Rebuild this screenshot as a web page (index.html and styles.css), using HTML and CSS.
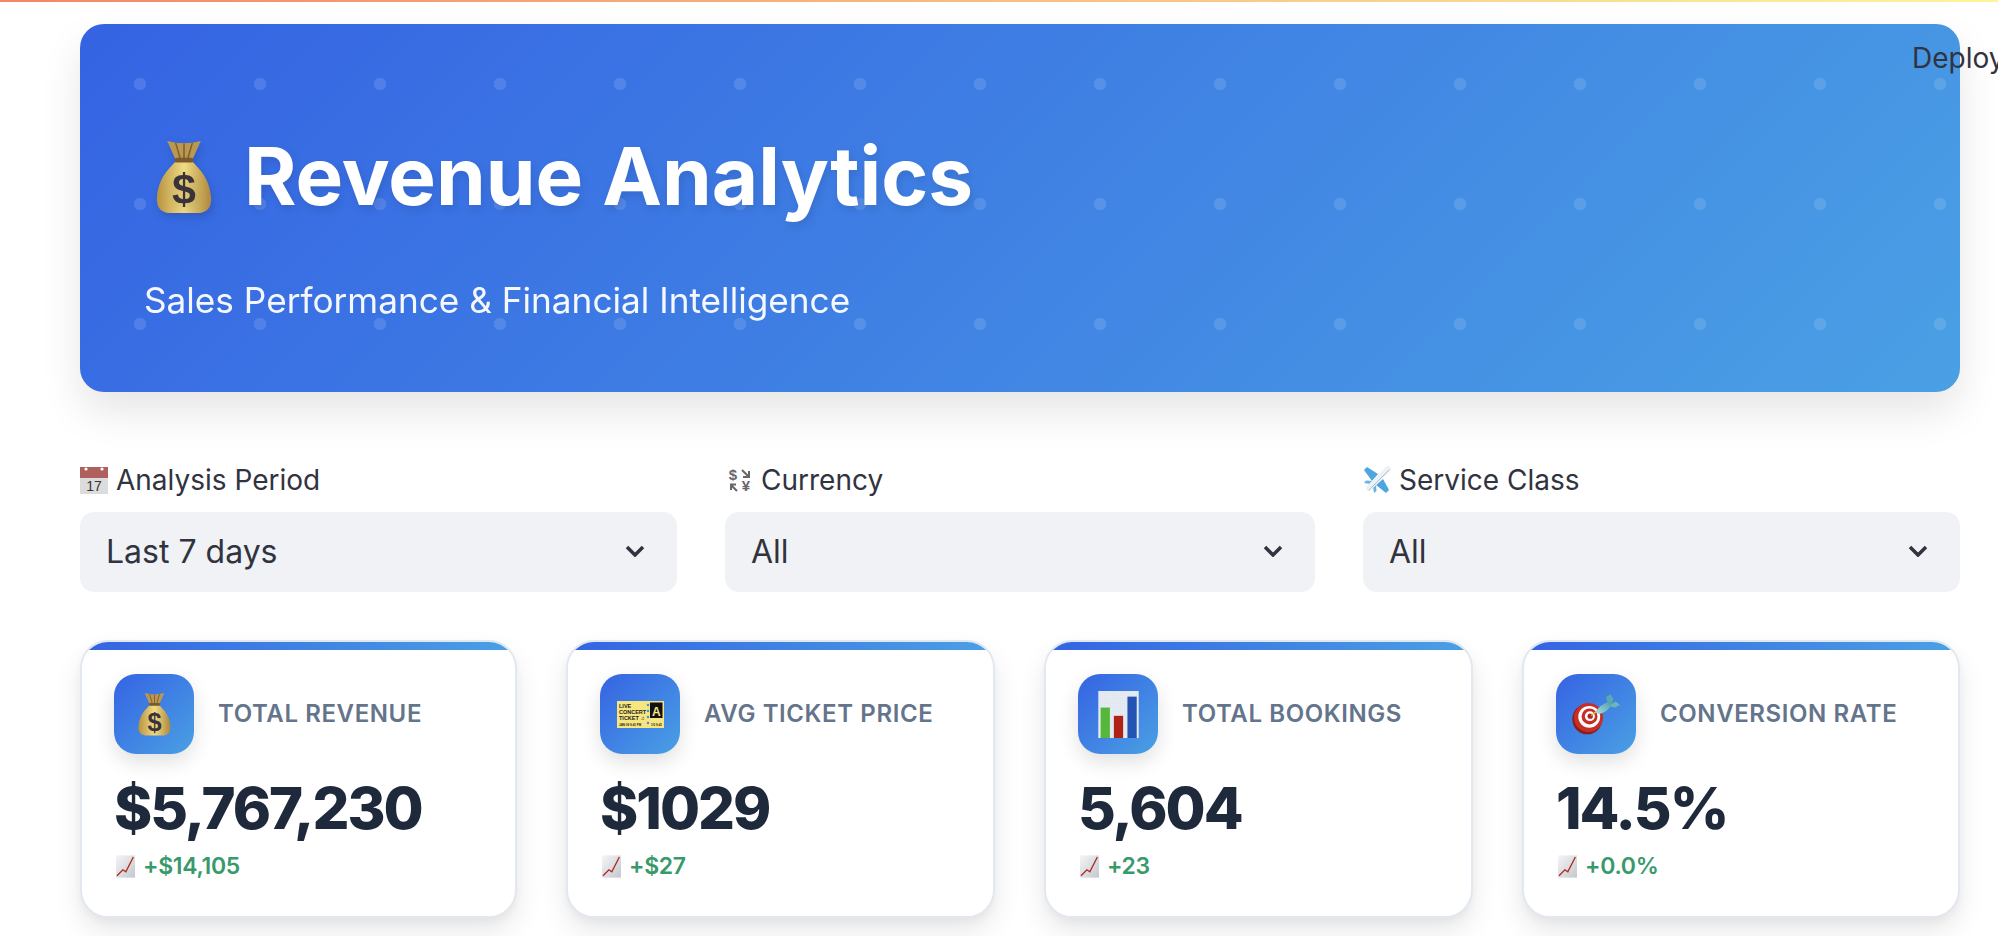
FILE: index.html
```html
<!DOCTYPE html>
<html lang="en">
<head>
  <meta charset="UTF-8" />
  <meta name="viewport" content="width=device-width, initial-scale=1.0" />
  <title>Revenue Analytics</title>
  <link rel="stylesheet" href="styles.css">
</head>
<body>
  <!-- Shared drawings -->
  <svg class="defs" aria-hidden="true">
    <defs>
      <linearGradient id="bagFill" x1="0" y1="0" x2="1" y2="0">
        <stop offset="0" stop-color="#b8923f"/>
        <stop offset="0.5" stop-color="#f0dc86"/>
        <stop offset="1" stop-color="#ad873c"/>
      </linearGradient>
      <linearGradient id="chartFill" x1="0" y1="0" x2="1" y2="1">
        <stop offset="0" stop-color="#f4f5f7"/>
        <stop offset="1" stop-color="#c4c9cf"/>
      </linearGradient>
      <linearGradient id="dartFill" x1="0" y1="1" x2="1" y2="0">
        <stop offset="0" stop-color="#a8e0e6"/>
        <stop offset="1" stop-color="#4f9aa6"/>
      </linearGradient>
      <pattern id="gridFill" width="6" height="6" patternUnits="userSpaceOnUse">
        <rect width="6" height="6" fill="#e9eef4"/>
        <path d="M0 0H6M0 0V6" stroke="#cfd8e2" stroke-width="1.2"/>
      </pattern>
    </defs>
    <symbol id="bag" viewBox="0 0 60 80">
      <path d="M12 2 Q30 7 48 2 L39 22 L21 22 Z" fill="#bb9750"/>
      <path d="M21 4 L26 21M30 5 V21M39 4 L34 21" stroke="#7d5f2c" stroke-width="1.6" fill="none"/>
      <path d="M21 24 C15 31 3 40 1 62 C0 74 6 78 13 79 L47 79 C54 78 60 74 59 62 C57 40 45 31 39 24 Z" fill="url(#bagFill)"/>
      <rect x="20" y="20" width="20" height="5" rx="2" fill="#7a5a2a"/>
    </symbol>
    <symbol id="chart-up" viewBox="0 0 58 68">
      <rect width="58" height="68" fill="url(#chartFill)"/>
      <path d="M3 62 L21 44 L30 50 L53 5" fill="none" stroke="#b3261c" stroke-width="4"/>
    </symbol>
  </svg>

  <div class="top-bar"></div>
  <a class="deploy">Deploy</a>

  <main class="page">
    <!-- Hero -->
    <header class="hero">
      <h1 class="hero-title">
        <svg class="hero-bag" viewBox="0 0 60 80"><use href="#bag"/><text x="30" y="70" class="bag-sign">$</text></svg>
        <span>Revenue Analytics</span>
      </h1>
      <p class="hero-sub">Sales Performance &amp; Financial Intelligence</p>
    </header>

    <!-- Filtres -->
    <section class="filters">
      <div class="filter">
        <div class="filter-label">
          <svg class="label-icon" viewBox="0 0 28 28">
            <rect y="1" width="28" height="27" fill="#dcdcdc"/>
            <path d="M0 1H28V12H0Z" fill="#b0605c"/>
            <circle cx="6" cy="3" r="1.6" fill="#fff"/>
            <circle cx="22" cy="3" r="1.6" fill="#fff"/>
            <text x="14" y="25" class="cal-day">17</text>
          </svg>
          Analysis Period
        </div>
        <div class="select">
          <span>Last 7 days</span>
          <svg class="chevron" viewBox="0 0 20 12"><path d="M2 2 L10 10 L18 2"/></svg>
        </div>
      </div>
      <div class="filter">
        <div class="filter-label">
          <svg class="label-icon" viewBox="0 0 28 28">
            <text x="8" y="14" class="fx-sign">$</text>
            <text x="21" y="25" class="fx-sign">¥</text>
            <path d="M17 4 L24 11M24 5 V11 H18" class="fx-arrow"/>
            <path d="M12 25 L6 19M6 24 V18.500 H11" class="fx-arrow"/>
          </svg>
          Currency
        </div>
        <div class="select">
          <span>All</span>
          <svg class="chevron" viewBox="0 0 20 12"><path d="M2 2 L10 10 L18 2"/></svg>
        </div>
      </div>
      <div class="filter">
        <div class="filter-label">
          <svg class="label-icon" viewBox="0 0 28 28">
            <path d="M15 8 L4 1 L1 4 L9 15 Z" fill="#4fa5e0"/>
            <path d="M20 13 L26 24 L23 27 L13 19 Z" fill="#4fa5e0"/>
            <path d="M7 18 L1 17 L3 14.500 L10 15 Z M10 21 L11 27 L13.500 25 L13 18 Z" fill="#6ab3e6"/>
            <path d="M6 22 L25 3" stroke="#eef1f4" stroke-width="6" stroke-linecap="round"/>
            <path d="M6 24 L26 4" stroke="#b4bcc5" stroke-width="1" stroke-linecap="round"/>
          </svg>
          Service Class
        </div>
        <div class="select">
          <span>All</span>
          <svg class="chevron" viewBox="0 0 20 12"><path d="M2 2 L10 10 L18 2"/></svg>
        </div>
      </div>
    </section>

    <!-- KPI -->
    <section class="kpis">
      <article class="card">
        <div class="card-bar"></div>
        <div class="card-body">
          <div class="card-head">
            <div class="card-icon"><svg class="icon-bag" viewBox="0 0 60 80"><use href="#bag"/><text x="30" y="70" class="bag-sign">$</text></svg></div>
            <div class="card-label">Total Revenue</div>
          </div>
          <div class="card-value">$5,767,230</div>
          <div class="card-delta"><svg class="delta-icon"><use href="#chart-up"/></svg>+$14,105</div>
        </div>
      </article>

      <article class="card">
        <div class="card-bar"></div>
        <div class="card-body">
          <div class="card-head">
            <div class="card-icon">
              <svg class="icon-ticket" viewBox="0 0 94 54">
                <rect width="94" height="54" fill="#f7e57f"/>
                <rect x="66" y="3" width="25" height="31" fill="#111"/>
                <text x="4" y="13" class="tk-line">LIVE</text>
                <text x="4" y="25" class="tk-line">CONCERT</text>
                <text x="4" y="37" class="tk-line">TICKET ♫</text>
                <text x="4" y="50" class="tk-small">JAN 09 9:41 PM</text>
                <text x="68" y="50" class="tk-small">1/0 9:41</text>
                <text x="78.500" y="30" class="tk-seat">A</text>
                <g fill="#4a8fe0">
                  <circle cx="62" cy="8" r="2.500"/>
                  <circle cx="62" cy="20" r="2.500"/>
                  <circle cx="62" cy="32" r="2.500"/>
                  <circle cx="62" cy="44" r="2.500"/>
                </g>
              </svg>
            </div>
            <div class="card-label">Avg Ticket Price</div>
          </div>
          <div class="card-value">$1029</div>
          <div class="card-delta"><svg class="delta-icon"><use href="#chart-up"/></svg>+$27</div>
        </div>
      </article>

      <article class="card">
        <div class="card-bar"></div>
        <div class="card-body">
          <div class="card-head">
            <div class="card-icon">
              <svg class="icon-chart" viewBox="0 0 122 142">
                <rect width="122" height="142" fill="url(#gridFill)"/>
                <rect x="7" y="50" width="28" height="92" fill="#55b83a"/>
                <rect x="47" y="75" width="28" height="67" fill="#ae2315"/>
                <rect x="88" y="17" width="28" height="125" fill="#2354b3"/>
              </svg>
            </div>
            <div class="card-label">Total Bookings</div>
          </div>
          <div class="card-value">5,604</div>
          <div class="card-delta"><svg class="delta-icon"><use href="#chart-up"/></svg>+23</div>
        </div>
      </article>

      <article class="card">
        <div class="card-bar"></div>
        <div class="card-body">
          <div class="card-head">
            <div class="card-icon">
              <svg class="icon-dart" viewBox="0 0 145 122">
                <ellipse cx="46" cy="75" rx="45" ry="46" fill="#8f1d17"/>
                <circle cx="50" cy="70" r="44" fill="#c62f28"/>
                <circle cx="52" cy="68" r="33" fill="#fff"/>
                <circle cx="53" cy="67" r="24" fill="#c62f28"/>
                <circle cx="54" cy="66" r="15" fill="#fff"/>
                <circle cx="55" cy="66" r="8" fill="#b5241e"/>
                <path d="M58 64 L76 50" stroke="#e9c24a" stroke-width="4"/>
                <path d="M108 26 L103 8 L116 0 L125 14 L120 28 Z" fill="#5da8b0"/>
                <path d="M116 30 L132 22 L145 32 L130 40 L112 36 Z" fill="#6cb4ba"/>
                <path d="M72 52 Q84 32 114 22 L120 30 Q108 54 80 60 Z" fill="url(#dartFill)"/>
              </svg>
            </div>
            <div class="card-label">Conversion Rate</div>
          </div>
          <div class="card-value">14.5%</div>
          <div class="card-delta"><svg class="delta-icon"><use href="#chart-up"/></svg>+0.0%</div>
        </div>
      </article>
    </section>
  </main>
</body>
</html>
```

FILE: styles.css
```css
/* ===============================
   BASE
   =============================== */
* {
  margin: 0;
  padding: 0;
  box-sizing: border-box;
}
html,
body {
  height: 100%;
  overflow: hidden;
}
body {
  font-family: Inter, "Liberation Sans", sans-serif;
  background: #fff;
  color: #31333f;
}
.defs {
  position: absolute;
  width: 0;
  height: 0;
}
.top-bar {
  height: 2px;
  background: linear-gradient(90deg, #f2866a, #fdf59a);
}
.deploy {
  position: absolute;
  top: 41px;
  left: 1912px;
  font-size: 28px;
  line-height: 34px;
  white-space: nowrap;
  z-index: 5;
}
.page {
  padding: 22px 38px 0 80px;
}

/* ===============================
   HERO
   =============================== */
.hero {
  height: 368px;
  padding: 90px 64px 0;
  border-radius: 24px;
  color: #fff;
  background-color: #3563e3;
  background-image:
    radial-gradient(circle at center, rgba(255, 255, 255, 0.12) 0 6px, transparent 6.5px),
    linear-gradient(135deg, #3563e3 0%, #4aa0e4 100%);
  background-size: 120px 120px, 100% 100%;
  box-shadow: 0 20px 40px rgba(0, 0, 0, 0.1);
}
.hero-title {
  display: flex;
  align-items: center;
  font-size: 80px;
  line-height: 124px;
  font-weight: 700;
  text-shadow: 2px 4px 8px rgba(0, 0, 0, 0.1);
}
.hero-bag {
  width: 56px;
  height: 75px;
  margin: 0 32px 0 12px;
  filter: drop-shadow(2px 4px 4px rgba(0, 0, 0, 0.15));
}
.hero-sub {
  margin-top: 40px;
  font-size: 35.200px;
  line-height: 44px;
  opacity: 0.95;
}

/* ===============================
   FILTERS
   =============================== */
.filters {
  display: grid;
  grid-template-columns: 597fr 590fr 597fr;
  gap: 48px;
  margin-top: 68px;
}
.filter-label {
  display: flex;
  align-items: center;
  gap: 8px;
  height: 40px;
  margin-bottom: 12px;
  font-size: 28px;
}
.label-icon {
  width: 28px;
  height: 28px;
  flex: none;
}
.cal-day {
  font: 14px "Liberation Sans", sans-serif;
  fill: #333;
  text-anchor: middle;
}
.fx-sign {
  font: 700 15px "Liberation Sans", sans-serif;
  fill: #66666c;
  text-anchor: middle;
}
.fx-arrow {
  fill: none;
  stroke: #66666c;
  stroke-width: 2;
}
.select {
  display: flex;
  align-items: center;
  justify-content: space-between;
  height: 80px;
  padding: 0 32px 2px 26px;
  border-radius: 14px;
  background: #f0f2f6;
  font-size: 32px;
}
.chevron {
  width: 20px;
  height: 12px;
}
.chevron path {
  fill: none;
  stroke: #31333f;
  stroke-width: 3.500;
}

/* ===============================
   KPI CARDS
   =============================== */
.kpis {
  display: grid;
  grid-template-columns: 437fr 429fr 429fr 438fr;
  gap: 49px;
  margin-top: 48px;
}
.card {
  height: 278px;
  border: 2px solid #e2e8f0;
  border-radius: 28px;
  overflow: hidden;
  background: #fff;
  box-shadow: 0 14px 28px rgba(0, 0, 0, 0.09), 0 4px 8px rgba(0, 0, 0, 0.04);
}
.card-bar {
  height: 8px;
  background: linear-gradient(90deg, #3563e3, #4aa0e4);
}
.card-body {
  padding: 24px 32px 0;
}
.card-head {
  display: flex;
  align-items: center;
  gap: 24px;
}
.card-icon {
  display: flex;
  align-items: center;
  justify-content: center;
  width: 80px;
  height: 80px;
  border-radius: 22px;
  background: linear-gradient(135deg, #3563e3, #4aa0e4);
  box-shadow: 0 8px 20px rgba(0, 0, 0, 0.12);
}
.icon-bag {
  width: 33px;
  height: 44px;
}
.bag-sign {
  font: 700 46px "Liberation Sans", sans-serif;
  fill: #3a3338;
  text-anchor: middle;
}
.icon-ticket {
  width: 47px;
  height: 27px;
}
.tk-line {
  font: 700 11px "Liberation Sans", sans-serif;
  fill: #222;
}
.tk-small {
  font: 700 6px "Liberation Sans", sans-serif;
  fill: #222;
}
.tk-seat {
  font: 700 24px "Liberation Sans", sans-serif;
  fill: #f7e57f;
  text-anchor: middle;
}
.icon-chart {
  width: 41px;
  height: 47px;
}
.icon-dart {
  width: 48px;
  height: 41px;
}
.card-label {
  padding-bottom: 2px;
  font-size: 24px;
  font-weight: 600;
  letter-spacing: 0.600px;
  color: #64748b;
  text-transform: uppercase;
  white-space: nowrap;
}
.card-value {
  margin-top: 19px;
  font-size: 58px;
  line-height: 70px;
  font-weight: 800;
  letter-spacing: -2px;
  color: #1e293b;
}
.card-delta {
  display: flex;
  align-items: center;
  gap: 8px;
  margin-top: 9px;
  padding-left: 2px;
  font-size: 23px;
  font-weight: 600;
  letter-spacing: -0.300px;
  color: #38996b;
}
.delta-icon {
  width: 19px;
  height: 23px;
}
```
